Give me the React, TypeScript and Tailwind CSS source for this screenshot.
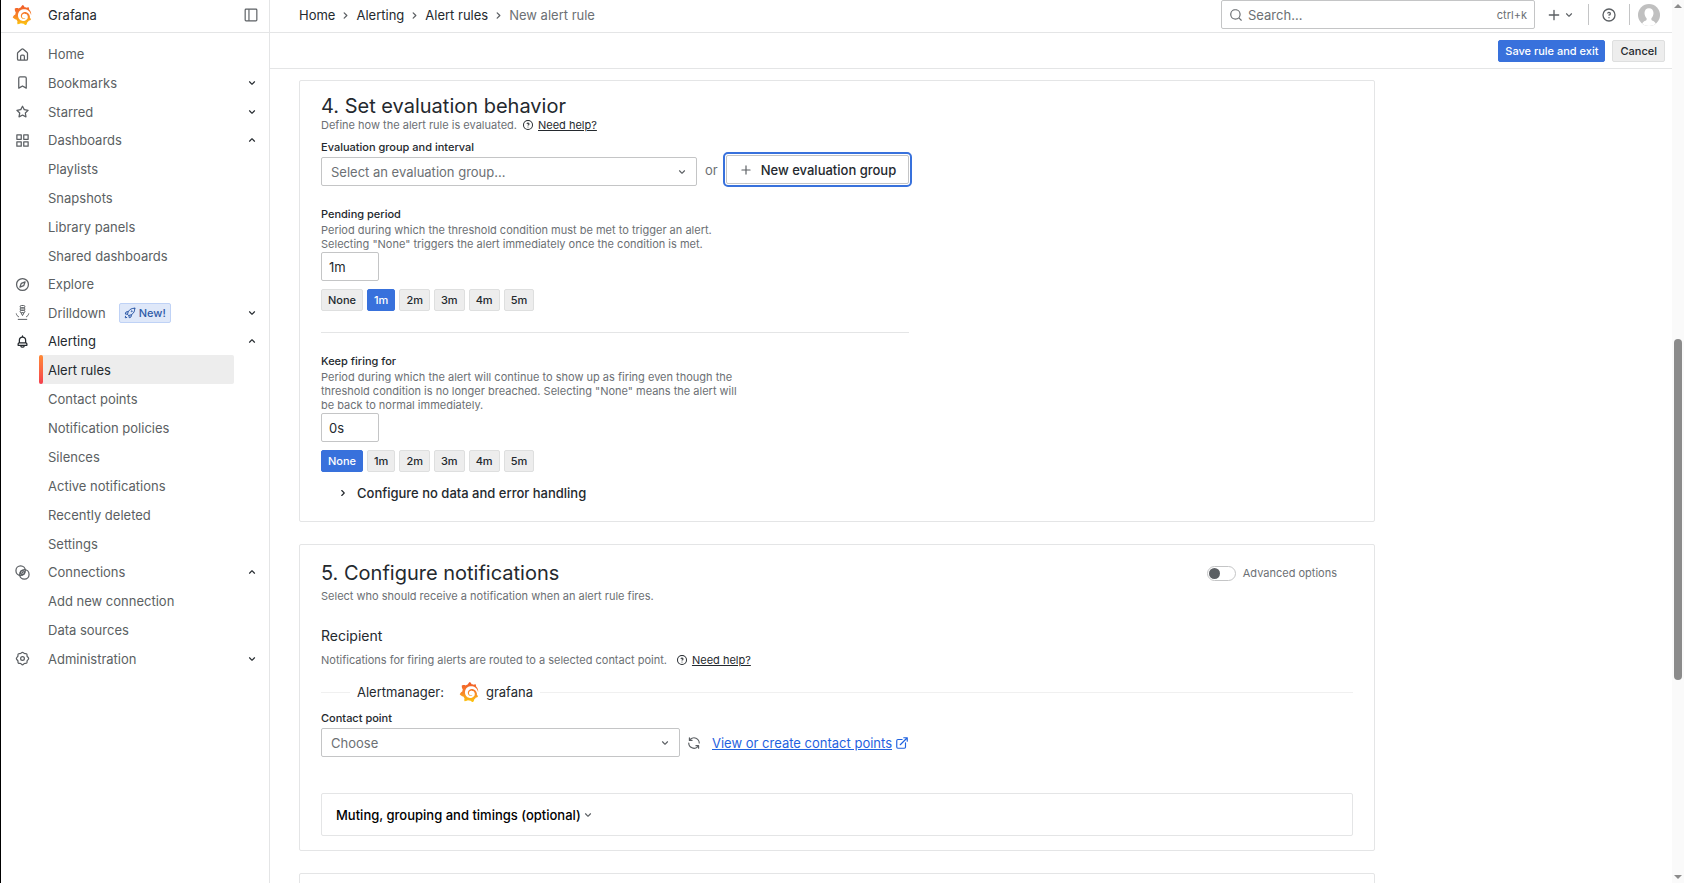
import React, { useState } from "react";
import { SiGrafana } from "react-icons/si";

const paths = {
  angleDown:
    "M17,9.17a1,1,0,0,0-1.41,0L12,12.71,8.46,9.17a1,1,0,0,0-1.41,0,1,1,0,0,0,0,1.42l4.24,4.24a1,1,0,0,0,1.42,0L17,10.59A1,1,0,0,0,17,9.17Z",
  angleUp:
    "M17,13.41,12.71,9.17a1,1,0,0,0-1.42,0L7.05,13.41a1,1,0,0,0,0,1.42,1,1,0,0,0,1.41,0L12,11.29l3.54,3.54a1,1,0,0,0,.7.29,1,1,0,0,0,.71-.29A1,1,0,0,0,17,13.41Z",
  angleRight:
    "M14.83,11.29,10.59,7.05a1,1,0,0,0-1.42,0,1,1,0,0,0,0,1.41L12.71,12,9.17,15.54a1,1,0,0,0,0,1.41,1,1,0,0,0,.71.29,1,1,0,0,0,.71-.29l4.24-4.24A1,1,0,0,0,14.83,11.29Z",
  search:
    "M21.71,20.29,18,16.61A9,9,0,1,0,16.61,18l3.68,3.68a1,1,0,0,0,1.42,0A1,1,0,0,0,21.71,20.29ZM11,18a7,7,0,1,1,7-7A7,7,0,0,1,11,18Z",
  plus: "M19,11H13V5a1,1,0,0,0-2,0v6H5a1,1,0,0,0,0,2h6v6a1,1,0,0,0,2,0V13h6a1,1,0,0,0,0-2Z",
  question:
    "M11.29,15.29a1.58,1.58,0,0,0-.12.15.76.76,0,0,0-.09.18.64.64,0,0,0-.06.18,1.36,1.36,0,0,0,0,.2.84.84,0,0,0,.08.38.9.9,0,0,0,.54.54.94.94,0,0,0,.76,0,.9.9,0,0,0,.54-.54A1,1,0,0,0,13,16a1,1,0,0,0-.29-.71A1,1,0,0,0,11.29,15.29ZM12,2A10,10,0,1,0,22,12,10,10,0,0,0,12,2Zm0,18a8,8,0,1,1,8-8A8,8,0,0,1,12,20ZM12,7A3,3,0,0,0,9.4,8.5a1,1,0,1,0,1.73,1A1,1,0,0,1,12,9a1,1,0,0,1,0,2,1,1,0,1,0,0,2,3,3,0,0,0,0-6Z",
  home: "M20,8h0L14,2.74a3,3,0,0,0-4,0L4,8a3,3,0,0,0-1,2.26V19a3,3,0,0,0,3,3H18a3,3,0,0,0,3-3V10.25A3,3,0,0,0,20,8ZM14,20H10V15a1,1,0,0,1,1-1h2a1,1,0,0,1,1,1Zm5-1a1,1,0,0,1-1,1H16V15a3,3,0,0,0-3-3H11a3,3,0,0,0-3,3v5H6a1,1,0,0,1-1-1V10.25a1,1,0,0,1,.34-.75l6-5.25a1,1,0,0,1,1.32,0l6,5.25a1,1,0,0,1,.34.75Z",
  bookmark:
    "M16,2H8A3,3,0,0,0,5,5V21a1,1,0,0,0,.5.87,1,1,0,0,0,1,0L12,18.69l5.5,3.18A1,1,0,0,0,18,22a1,1,0,0,0,.5-.13A1,1,0,0,0,19,21V5A3,3,0,0,0,16,2Zm1,17.27-4.5-2.6a1,1,0,0,0-1,0L7,19.27V5A1,1,0,0,1,8,4h8a1,1,0,0,1,1,1Z",
  star: "M22,9.67A1,1,0,0,0,21.14,9l-5.69-.83L12.9,3a1,1,0,0,0-1.8,0L8.55,8.16,2.86,9a1,1,0,0,0-.81.68,1,1,0,0,0,.25,1l4.13,4-1,5.68A1,1,0,0,0,6.9,21.44L12,18.77l5.1,2.67a.93.93,0,0,0,.46.12,1,1,0,0,0,.59-.19,1,1,0,0,0,.4-1l-1-5.68,4.13-4A1,1,0,0,0,22,9.67Zm-6.15,4a1,1,0,0,0-.29.88l.72,4.2-3.76-2a1.06,1.06,0,0,0-.94,0l-3.76,2,.72-4.2a1,1,0,0,0-.29-.88l-3-3,4.21-.61a1,1,0,0,0,.76-.55L12,5.7l1.88,3.82a1,1,0,0,0,.76.55l4.21.61Z",
  apps: "M10,13H3a1,1,0,0,0-1,1v7a1,1,0,0,0,1,1h7a1,1,0,0,0,1-1V14A1,1,0,0,0,10,13ZM9,20H4V15H9ZM21,2H14a1,1,0,0,0-1,1v7a1,1,0,0,0,1,1h7a1,1,0,0,0,1-1V3A1,1,0,0,0,21,2ZM20,9H15V4h5Zm1,4H14a1,1,0,0,0-1,1v7a1,1,0,0,0,1,1h7a1,1,0,0,0,1-1V14A1,1,0,0,0,21,13Zm-1,7H15V15h5ZM10,2H3A1,1,0,0,0,2,3v7a1,1,0,0,0,1,1h7a1,1,0,0,0,1-1V3A1,1,0,0,0,10,2ZM9,9H4V4H9Z",
  bell: "M18,13.18V10a6,6,0,0,0-5-5.91V3a1,1,0,0,0-2,0V4.09A6,6,0,0,0,6,10v3.18A3,3,0,0,0,4,16v2a1,1,0,0,0,1,1H8.14a4,4,0,0,0,7.72,0H19a1,1,0,0,0,1-1V16A3,3,0,0,0,18,13.18ZM8,10a4,4,0,0,1,8,0v3H8Zm4,10a2,2,0,0,1-1.72-1h3.44A2,2,0,0,1,12,20Zm6-3H6V16a1,1,0,0,1,1-1H17a1,1,0,0,1,1,1Z",
  external:
    "M18,10.82a1,1,0,0,0-1,1V19a1,1,0,0,1-1,1H5a1,1,0,0,1-1-1V8A1,1,0,0,1,5,7h7.18a1,1,0,0,0,0-2H5A3,3,0,0,0,2,8V19a3,3,0,0,0,3,3H16a3,3,0,0,0,3-3V11.82A1,1,0,0,0,18,10.82Zm3.92-8.2a1,1,0,0,0-.54-.54A1,1,0,0,0,21,2H15a1,1,0,0,0,0,2h3.59L8.29,14.29a1,1,0,0,0,0,1.42,1,1,0,0,0,1.42,0L20,5.41V9a1,1,0,0,0,2,0V3A1,1,0,0,0,21.92,2.62Z",
  sync: "M19.91,15.51H15.38a1,1,0,0,0,0,2h2.4A8,8,0,0,1,4,12a1,1,0,0,0-2,0,10,10,0,0,0,16.88,7.23V21a1,1,0,0,0,2,0V16.5A1,1,0,0,0,19.91,15.51ZM12,2A10,10,0,0,0,5.12,4.77V3a1,1,0,0,0-2,0V7.5a1,1,0,0,0,1,1h4.5a1,1,0,0,0,0-2H6.22A8,8,0,0,1,20,12a1,1,0,0,0,2,0A10,10,0,0,0,12,2Z",
};

type SolidName = keyof typeof paths;

const strokes: Record<string, React.ReactNode> = {
  compass: (
    <>
      <circle cx="12" cy="12" r="9.5" />
      <path d="M16.2 7.8 13.9 13.9 7.8 16.2 10.1 10.1Z" strokeLinejoin="round" />
    </>
  ),
  drilldown: (
    <g strokeWidth="1.6">
      <rect x="8.2" y="0.8" width="7.6" height="3.8" rx="1.9" />
      <rect x="8.2" y="4.6" width="7.6" height="3.8" rx="1.9" />
      <rect x="8.2" y="8.4" width="7.6" height="3.8" rx="1.9" />
      <path d="M9.500 12.200 12 17 14.500 12.200M2 13.500c.5 2.800 2 4.500 4.200 5.500M22 13.500c-.5 2.800-2 4.500-4.200 5.500M4.500 23h15" />
    </g>
  ),
  connections: (
    <>
      <circle cx="9" cy="9" r="7.500" />
      <circle cx="15" cy="15" r="7.500" />
      <circle cx="12" cy="12" r="3.200" />
      <path d="M10.500 13.500 13.500 10.500" />
    </>
  ),
  cog: (
    <>
      <path
        strokeLinejoin="round"
        d="M12 2c1.300 0 1.900 1.600 3 2s2.700-.4 3.700.6.200 2.500.7 3.700 2.400 2 2.400 3.700-1.900 2.300-2.400 3.700.4 2.700-.7 3.700-2.600.1-3.700.6-1.700 2-3 2-1.900-1.600-3-2-2.700.4-3.700-.6-.2-2.500-.7-3.700S2.200 13.600 2.200 12s1.900-2.300 2.400-3.700-.4-2.700.7-3.700 2.600-.1 3.700-.6 1.700-2 3-2Z"
      />
      <circle cx="12" cy="12" r="3" />
    </>
  ),
  dock: (
    <>
      <rect x="2" y="2" width="20" height="20" rx="1.500" />
      <path d="M8.500 2v20" />
    </>
  ),
  rocket: (
    <>
      <path
        strokeLinejoin="round"
        strokeLinecap="round"
        d="M21.500 2.500c-6-.3-10 2-13 6.700L4 10l-1.500 4 4.500.5 3 3L10.500 21.500 14 20l.8-4.500c4.700-3 7-7 6.700-13ZM8.500 9.200 7 14.500M9.500 17 14.800 15.500M3 18.500 2.500 21.500 5.500 21"
      />
      <circle cx="15.500" cy="8.500" r="1" />
    </>
  ),
};

function Icon({ name, className }: { name: string; className?: string }) {
  const solid = paths[name as SolidName];
  return solid ? (
    <svg viewBox="0 0 24 24" className={className} fill="currentColor" aria-hidden="true">
      <path d={solid} />
    </svg>
  ) : (
    <svg viewBox="0 0 24 24" className={className} fill="none" stroke="currentColor" strokeWidth="2" aria-hidden="true">
      {strokes[name]}
    </svg>
  );
}

function Logo({ className }: { className: string }) {
  return <SiGrafana className={className} style={{ fill: "url(#flame)" }} aria-hidden="true" />;
}

type NavSection = { label: string; icon: string; open?: boolean; badge?: string; children?: string[] };

const nav: NavSection[] = [
  { label: "Home", icon: "home" },
  { label: "Bookmarks", icon: "bookmark", open: false },
  { label: "Starred", icon: "star", open: false },
  {
    label: "Dashboards",
    icon: "apps",
    open: true,
    children: ["Playlists", "Snapshots", "Library panels", "Shared dashboards"],
  },
  { label: "Explore", icon: "compass" },
  { label: "Drilldown", icon: "drilldown", open: false, badge: "New!" },
  {
    label: "Alerting",
    icon: "bell",
    open: true,
    children: [
      "Alert rules",
      "Contact points",
      "Notification policies",
      "Silences",
      "Active notifications",
      "Recently deleted",
      "Settings",
    ],
  },
  { label: "Connections", icon: "connections", open: true, children: ["Add new connection", "Data sources"] },
  { label: "Administration", icon: "cog", open: false },
];

function Sidebar() {
  return (
    <aside className="flex w-[269px] shrink-0 flex-col border-r border-[#e4e5e6]">
      <div className="flex h-[33px] shrink-0 items-center border-b border-[#e4e5e6] pr-[11px] pb-[3px] pl-[11px]">
        <Logo className="size-5" />
        <span className="ml-4 flex-1 text-[#24292e]">Grafana</span>
        <button type="button" aria-label="Undock menu" className="text-[#5b5f63]">
          <Icon name="dock" className="size-3.5" />
        </button>
      </div>
      <nav aria-label="Main" className="pt-[7px]">
        <ul>
          {nav.map((section) => (
            <li key={section.label}>
              <div
                className={
                  (section.label === "Alerting" ? "text-[#24292e]" : "text-[#5b5f63]") +
                  " flex items-center pr-2.5 pl-[14px] " +
                  (section.open === false ? "h-[29px]" : "h-7")
                }
              >
                <Icon name={section.icon} className="size-[15px]" />
                <a href="#" className="ml-[18px]">
                  {section.label}
                </a>
                {section.badge && (
                  <span className="ml-[13px] flex h-5 items-center gap-[3px] rounded-xs border border-[#bfd2f6] bg-[#dfe8f9] px-1 text-[11px] font-medium text-[#2f5ba8]">
                    <Icon name="rocket" className="size-3" />
                    {section.badge}
                  </span>
                )}
                {section.open !== undefined && (
                  <button
                    type="button"
                    aria-expanded={section.open}
                    aria-label={"Toggle " + section.label}
                    className="ml-auto text-[#24292e]"
                  >
                    <Icon name={section.open ? "angleUp" : "angleDown"} className="size-[14px]" />
                  </button>
                )}
              </div>
              {section.children && (
                <ul className="pr-[35px] pl-[38px]">
                  {section.children.map((child) =>
                    child === "Alert rules" ? (
                      <li key={child} className="flex h-[29px] rounded-xs bg-[#ededed]">
                        <span className="w-1 rounded-xs bg-linear-to-b from-[#ff8833] to-[#f53e4c]" />
                        <a href="#" aria-current="page" className="flex flex-1 items-center pl-[5px] text-[#24292e]">
                          {child}
                        </a>
                      </li>
                    ) : (
                      <li key={child} className="flex h-[29px] items-center pl-[9px] text-[#5b5f63]">
                        <a href="#">{child}</a>
                      </li>
                    ),
                  )}
                </ul>
              )}
            </li>
          ))}
        </ul>
      </nav>
    </aside>
  );
}

function TopBar() {
  return (
    <header className="flex h-[33px] shrink-0 items-start border-b border-[#e4e5e6] pr-3 pl-[29px]">
      <nav aria-label="Breadcrumbs" className="flex h-[30px] items-center text-[#24292e]">
        {["Home", "Alerting", "Alert rules"].map((crumb) => (
          <React.Fragment key={crumb}>
            <a href="#">{crumb}</a>
            <Icon name="angleRight" className="mx-[3px] size-[15px] text-[#5b5f63]" />
          </React.Fragment>
        ))}
        <span className="text-[#6c7074]">New alert rule</span>
      </nav>
      <div className="ml-auto flex h-[29px] w-[314px] items-center rounded-xs border border-[#c4c5c6] px-[7px] text-[#6c7074]">
        <Icon name="search" className="size-3.5 shrink-0" />
        <input
          type="search"
          aria-label="Search"
          placeholder="Search..."
          className="ml-[5px] min-w-0 flex-1 bg-transparent outline-none placeholder:text-[#6c7074]"
        />
        <kbd className="font-[Inter] text-[11px]">ctrl+k</kbd>
      </div>
      <div className="ml-[11px] flex h-[29px] items-center text-[#5b5f63]">
        <button type="button" aria-label="New" className="flex items-center">
          <Icon name="plus" className="size-4" />
          <Icon name="angleDown" className="size-3.5" />
        </button>
        <span className="ml-3 h-[21px] w-px bg-[#c4c5c6]" />
        <button type="button" aria-label="Help" className="ml-3">
          <Icon name="question" className="size-4" />
        </button>
        <span className="ml-3 h-[21px] w-px bg-[#c4c5c6]" />
        <button type="button" aria-label="Profile" className="ml-2 size-[22px] overflow-hidden rounded-full">
          <svg viewBox="0 0 22 22" aria-hidden="true">
            <rect width="22" height="22" fill="#c0c0c0" />
            <path
              fill="#fff"
              d="M11 4.200c2.800 0 4.500 2 4.500 4.900 0 2.200-.9 4.100-2.100 5.200v1.400c0 .9 3.600 1.300 4.600 4.300V22H4v-2c1-3 4.600-3.400 4.600-4.300v-1.400C7.400 13.200 6.500 11.300 6.500 9.100c0-2.900 1.700-4.900 4.500-4.900Z"
            />
          </svg>
        </button>
      </div>
    </header>
  );
}

function NeedHelp({ className }: { className: string }) {
  return (
    <button type="button" className={"flex items-center gap-1 text-[#24292e] " + className}>
      <Icon name="question" className="size-3" />
      <span className="underline">Need help?</span>
    </button>
  );
}

function Select({ id, placeholder, className }: { id: string; placeholder: string; className: string }) {
  return (
    <div className={"relative " + className}>
      <select
        id={id}
        defaultValue=""
        className="block h-[29px] w-full appearance-none rounded-xs border border-[#c4c5c6] bg-white px-[9px] text-[#6c7074]"
      >
        <option value="">{placeholder}</option>
      </select>
      <Icon name="angleDown" className="pointer-events-none absolute top-2 right-2 size-3.5 text-[#5b5f63]" />
    </div>
  );
}

function PeriodField({ id, label, help, initial }: { id: string; label: string; help: string; initial: string }) {
  const [value, setValue] = useState(initial);
  return (
    <div className="mt-[21px]">
      <label htmlFor={id} className="block text-[11px] leading-[14px] font-medium">
        {label}
      </label>
      <p className="mt-0.5 max-w-[430px] text-[11px] leading-[14px] text-[#6c7074]">{help}</p>
      <input
        id={id}
        value={value}
        onChange={(e) => setValue(e.target.value)}
        className="mt-px block h-[29px] w-[58px] rounded-xs border border-[#c4c5c6] px-[7px]"
      />
      <div className="mt-2 flex gap-1">
        {["None", "1m", "2m", "3m", "4m", "5m"].map((option) => {
          const active = option === value || (option === "None" && value === "0s");
          return (
            <button
              key={option}
              type="button"
              aria-pressed={active}
              onClick={() => setValue(option === "None" ? "0s" : option)}
              className={
                "h-[22px] rounded-xs border px-1.5 text-[11px] font-medium " +
                (active ? "border-[#3871dc] bg-[#3871dc] text-white" : "border-[#dedfdf] bg-[#ededed] text-[#24292e]")
              }
            >
              {option}
            </button>
          );
        })}
      </div>
    </div>
  );
}

function EvaluationCard() {
  return (
    <section className="rounded-xs border border-[#e4e5e6] px-[21px] pt-[13px] pb-[18px]">
      <h2 className="text-xl leading-6">4. Set evaluation behavior</h2>
      <div className="flex text-[11px] leading-[14px] text-[#6c7074]">
        Define how the alert rule is evaluated.
        <NeedHelp className="ml-[5px]" />
      </div>
      <label htmlFor="group" className="mt-2 block text-[11px] leading-[14px] font-medium">
        Evaluation group and interval
      </label>
      <div className="mt-[3px] flex max-w-[588px] items-start">
        <Select id="group" placeholder="Select an evaluation group..." className="w-[376px] shrink-0" />
        <span className="mx-2 leading-[26px] text-[#6c7074]">or</span>
        <button
          type="button"
          className="-mt-0.5 ml-auto flex h-[29px] items-center rounded-xs border border-[#c4c5c6] px-3 font-medium whitespace-nowrap outline-2 outline-offset-1 outline-[#3871dc]"
        >
          <Icon name="plus" className="mr-2 size-3.5 text-[#5b5f63]" />
          New evaluation group
        </button>
      </div>
      <PeriodField
        id="pending"
        label="Pending period"
        help={'Period during which the threshold condition must be met to trigger an alert. Selecting "None" triggers the alert immediately once the condition is met.'}
        initial="1m"
      />
      <hr className="mt-[21px] max-w-[588px] border-[#e4e5e6]" />
      <PeriodField
        id="keep-firing"
        label="Keep firing for"
        help={'Period during which the alert will continue to show up as firing even though the threshold condition is no longer breached. Selecting "None" means the alert will be back to normal immediately.'}
        initial="0s"
      />
      <button type="button" aria-expanded="false" className="mt-[11px] ml-[15px] flex items-center leading-5 font-medium">
        <Icon name="angleRight" className="mr-[7px] size-3.5" />
        Configure no data and error handling
      </button>
    </section>
  );
}

function NotificationsCard() {
  return (
    <section className="rounded-xs border border-[#e4e5e6] px-[21px] pt-4 pb-[14px]">
      <div className="flex items-center justify-between">
        <h2 className="text-xl leading-6">5. Configure notifications</h2>
        <label className="mr-4 flex items-center gap-[7px] text-[11px] text-[#6c7074]">
          <input type="checkbox" role="switch" className="peer sr-only" />
          <span className="flex h-[15px] w-[29px] items-center rounded-full border border-[#c4c5c6] pl-px peer-checked:justify-end">
            <span className="size-[11px] rounded-full bg-[#5b5f63]" />
          </span>
          Advanced options
        </label>
      </div>
      <p className="mt-1 text-[11px] leading-[14px] text-[#6c7074]">
        Select who should receive a notification when an alert rule fires.
      </p>
      <h3 className="mt-[23px] text-sm leading-5">Recipient</h3>
      <div className="mt-[7px] flex text-[11px] leading-[14px] text-[#6c7074]">
        Notifications for firing alerts are routed to a selected contact point.
        <NeedHelp className="ml-[9px]" />
      </div>
      <div className="mt-[15px] flex h-5 items-center">
        <span className="h-px w-[29px] bg-[#f0f0f0]" />
        <span className="ml-[7px]">Alertmanager:</span>
        <Logo className="ml-[15px] size-5" />
        <span className="ml-[7px]">grafana</span>
        <span className="ml-[7px] h-px flex-1 bg-[#f0f0f0]" />
      </div>
      <label htmlFor="contact" className="mt-[9px] block text-[11px] leading-[14px] font-medium">
        Contact point
      </label>
      <div className="mt-[3px] flex items-center">
        <Select id="contact" placeholder="Choose" className="w-[359px]" />
        <button type="button" aria-label="Refresh contact points" className="ml-[7px] text-[#5b5f63]">
          <Icon name="sync" className="size-3.5" />
        </button>
        <a href="#" className="ml-[11px] flex items-center gap-[3px] text-[#1f62e0]">
          <span className="underline">View or create contact points</span>
          <Icon name="external" className="size-3.5" />
        </a>
      </div>
      <div className="mt-9 flex h-[43px] items-center rounded-xs border border-[#e4e5e6] px-[14px]">
        <button type="button" aria-expanded="false" className="flex items-center font-medium text-black">
          Muting, grouping and timings (optional)
          <Icon name="angleDown" className="mt-px size-3.5 text-[#5b5f63]" />
        </button>
      </div>
    </section>
  );
}

function ScrollTrack() {
  return (
    <div aria-hidden="true" className="flex w-3 shrink-0 flex-col items-center bg-[#fafafa] py-1 text-[#8b8b8b]">
      <svg viewBox="0 0 8 4" className="h-1 w-2" fill="currentColor">
        <path d="M0 4 4 0 8 4Z" />
      </svg>
      <span className="grow-[63]" />
      <span className="h-[39%] w-2 rounded-full bg-current" />
      <span className="grow-[37]" />
      <svg viewBox="0 0 8 4" className="h-1 w-2" fill="currentColor">
        <path d="M0 0 4 4 8 0Z" />
      </svg>
    </div>
  );
}

export default function App() {
  return (
    <div className="flex h-screen overflow-hidden border-l border-black bg-white font-[Inter,sans-serif] text-[13px] leading-5 text-[#24292e]">
      <svg className="absolute size-0" aria-hidden="true">
        <defs>
          <linearGradient id="flame" x1="0" y1="0" x2="0" y2="1">
            <stop offset="0" stopColor="#f05a28" />
            <stop offset="0.5" stopColor="#f7802a" />
            <stop offset="1" stopColor="#fcc80f" />
          </linearGradient>
        </defs>
      </svg>
      <Sidebar />
      <div className="flex min-w-0 flex-1 flex-col">
        <TopBar />
        <div className="flex h-9 shrink-0 items-center justify-end gap-[7px] border-b border-[#e4e5e6] pr-[7px]">
          <button
            type="button"
            className="h-[22px] rounded-xs border border-[#3871dc] bg-[#3871dc] px-1.5 text-[11px] font-medium text-white"
          >
            Save rule and exit
          </button>
          <button
            type="button"
            className="h-[22px] rounded-xs border border-[#dedfdf] bg-[#ededed] px-[7px] text-[11px] font-medium"
          >
            Cancel
          </button>
        </div>
        <main className="min-h-0 flex-1 overflow-hidden pt-[11px] pr-7 pl-[29px]">
          <div className="flex max-w-[1076px] flex-col gap-[22px]">
            <EvaluationCard />
            <NotificationsCard />
            <section className="h-40 rounded-xs border border-[#e4e5e6]" />
          </div>
        </main>
      </div>
      <ScrollTrack />
    </div>
  );
}
